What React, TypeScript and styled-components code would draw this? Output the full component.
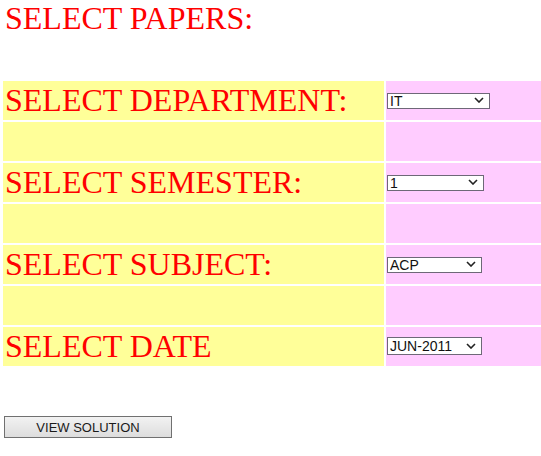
import React from "react";
import styled, { createGlobalStyle } from "styled-components";

const Global = createGlobalStyle`
  html, body { margin: 0; padding: 0; background: #ffffff; }
  body { font-family: "Liberation Serif", "Times New Roman", serif; }
`;

const Page = styled.div`
  width: 541px;
  padding-left: 3px;
  box-sizing: border-box;
  overflow: hidden;
`;

const Title = styled.h1`
  margin: 0;
  padding-left: 2px;
  font-weight: normal;
  font-size: 32px;
  line-height: 36px;
  color: #ff0000;
  font-family: "Liberation Serif", "Times New Roman", serif;
`;

const Table = styled.div`
  margin-top: 45px;
  display: grid;
  grid-template-columns: 381px 160px;
  grid-auto-rows: 39px;
  column-gap: 2px;
  row-gap: 2px;
`;

const LabelCell = styled.div`
  background: #ffff99;
  display: flex;
  align-items: center;
  padding-left: 2px;
  padding-top: 0;
  font-size: 32px;
  color: #ff0000;
  white-space: nowrap;
`;

const FieldCell = styled.div`
  background: #ffccff;
  display: flex;
  align-items: center;
  padding-left: 1px;
  padding-bottom: 2px;
`;

const SelectWrap = styled.div<{ $w: number; $h: number }>`
  position: relative;
  width: ${(p) => p.$w}px;
  height: ${(p) => p.$h}px;
`;

const Select = styled.select`
  appearance: none;
  -webkit-appearance: none;
  width: 100%;
  height: 100%;
  margin: 0;
  padding: 0 0 0 2px;
  box-sizing: border-box;
  border: 1px solid #6e6878;
  border-radius: 0;
  background: #ffffff;
  color: #111111;
  font-family: "Liberation Sans", Arial, sans-serif;
  font-size: 14px;
  line-height: 14px;
  outline: none;
`;

const Chevron = styled.svg`
  position: absolute;
  right: 6px;
  top: 50%;
  margin-top: -3px;
  width: 10px;
  height: 6px;
  pointer-events: none;
`;

const Footer = styled.div`
  margin-top: 50px;
  padding-left: 1px;
  padding-bottom: 18px;
`;

const Button = styled.button`
  width: 168px;
  height: 22px;
  margin: 0;
  padding: 0;
  box-sizing: border-box;
  border: 1px solid #707070;
  border-radius: 0;
  background: linear-gradient(#f2f2f2, #dddddd);
  color: #1a1a1a;
  font-family: "Liberation Sans", Arial, sans-serif;
  font-size: 13px;
`;

type Row = { label: string; value: string; w: number; h: number };

const rows: Row[] = [
  { label: "SELECT DEPARTMENT:", value: "IT", w: 103, h: 16 },
  { label: "SELECT SEMESTER:", value: "1", w: 97, h: 16 },
  { label: "SELECT SUBJECT:", value: "ACP", w: 95, h: 16 },
  { label: "SELECT DATE", value: "JUN-2011", w: 95, h: 18 },
];

function Dropdown({ value, w, h }: { value: string; w: number; h: number }) {
  return (
    <SelectWrap $w={w} $h={h}>
      <Select defaultValue={value}>
        <option value={value}>{value}</option>
      </Select>
      <Chevron viewBox="0 0 10 6">
        <path d="M1 1 L5 5 L9 1" fill="none" stroke="#222" strokeWidth="1.6" />
      </Chevron>
    </SelectWrap>
  );
}

export default function App() {
  return (
    <>
      <Global />
      <Page>
        <Title>SELECT PAPERS:</Title>
        <Table>
          {rows.map((r, i) => (
            <React.Fragment key={r.label}>
              <LabelCell>{r.label}</LabelCell>
              <FieldCell>
                <Dropdown value={r.value} w={r.w} h={r.h} />
              </FieldCell>
              {i < rows.length - 1 && (
                <>
                  <LabelCell />
                  <FieldCell />
                </>
              )}
            </React.Fragment>
          ))}
        </Table>
        <Footer>
          <Button>VIEW SOLUTION</Button>
        </Footer>
      </Page>
    </>
  );
}
